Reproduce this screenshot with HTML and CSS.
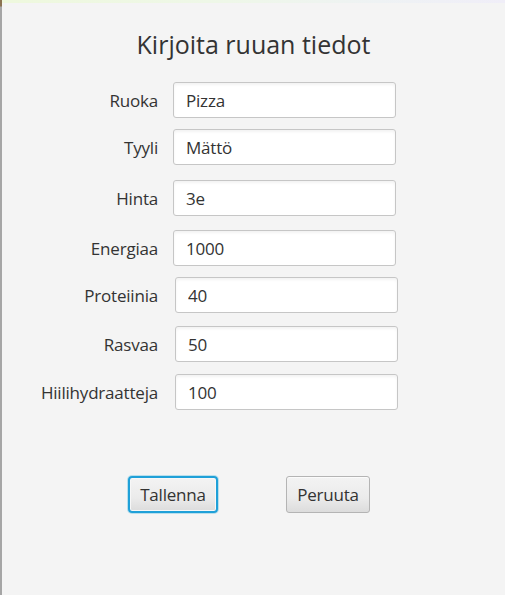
FILE: index.html
```html
<!DOCTYPE html>
<html lang="fi">
<head>
<meta charset="utf-8">
<title>Kirjoita ruuan tiedot</title>
<link rel="stylesheet" href="styles.css">
</head>
<body>
<div class="window">
  <div class="edge"></div>
  <div class="main">
    <div class="topbar"></div>
    <div class="content">
      <h1 class="title">Kirjoita ruuan tiedot</h1>
      <div class="form">
        <div class="row"><label class="lbl">Ruoka</label><input class="field" type="text" value="Pizza"></div>
        <div class="row mt11"><label class="lbl">Tyyli</label><input class="field" type="text" value="Mättö"></div>
        <div class="row mt15"><label class="lbl">Hinta</label><input class="field" type="text" value="3e"></div>
        <div class="row mt14"><label class="lbl">Energiaa</label><input class="field" type="text" value="1000"></div>
        <div class="row mt11 shifted"><label class="lbl">Proteiinia</label><input class="field" type="text" value="40"></div>
        <div class="row mt13 shifted"><label class="lbl">Rasvaa</label><input class="field" type="text" value="50"></div>
        <div class="row mt12 shifted"><label class="lbl">Hiilihydraatteja</label><input class="field" type="text" value="100"></div>
      </div>
      <div class="buttons">
        <button class="btn btn-focus" type="button">Tallenna</button>
        <button class="btn btn-cancel" type="button">Peruuta</button>
      </div>
    </div>
  </div>
</div>
</body>
</html>
```

FILE: styles.css
```css
html, body {
  margin: 0;
  padding: 0;
}
body {
  background: #f4f4f4;
  font-family: "Open Sans", "Noto Sans", sans-serif;
  color: #333333;
}
.window {
  display: flex;
  width: 505px;
  height: 595px;
  overflow: hidden;
}
.edge {
  width: 2px;
  flex: none;
  background: linear-gradient(to bottom, #8b7352 0, #8b7352 6px, #a6a6a6 7px, #a6a6a6 100%);
}
.main {
  flex: 1;
  display: flex;
  flex-direction: column;
}
.topbar {
  height: 3px;
  flex: none;
  background: linear-gradient(to right, #eef8dd 0%, #eef7e8 45%, #eef2f4 75%, #f0eef8 100%);
}
.content {
  flex: 1;
  background: #f4f4f4;
}
.title {
  margin: 0;
  padding-top: 25px;
  text-align: center;
  font-size: 25px;
  font-weight: 400;
  line-height: 32px;
  color: #333333;
}
.form {
  margin-top: 22px;
  display: flex;
  flex-direction: column;
}
.row {
  display: flex;
  align-items: center;
  gap: 15px;
  height: 36px;
}
.row.shifted { gap: 17px; }
.mt11 { margin-top: 11px; }
.mt12 { margin-top: 12px; }
.mt13 { margin-top: 13px; }
.mt14 { margin-top: 14px; }
.mt15 { margin-top: 15px; }
.lbl {
  width: 156px;
  flex: none;
  text-align: right;
  font-size: 17px;
  letter-spacing: -0.2px;
  color: #333333;
}
.field {
  box-sizing: border-box;
  width: 223px;
  height: 36px;
  margin: 0;
  padding: 0 12px;
  border: 1px solid #c6c6c6;
  border-radius: 3px;
  background: #ffffff;
  box-shadow: inset 0 2px 3px rgba(0, 0, 0, 0.05);
  font-family: "Open Sans", "Noto Sans", sans-serif;
  font-size: 17px;
  letter-spacing: -0.2px;
  color: #333333;
  outline: none;
}
.buttons {
  display: flex;
  margin-top: 66px;
  margin-left: 126px;
  gap: 68px;
}
.btn {
  box-sizing: border-box;
  height: 37px;
  margin: 0;
  padding: 0;
  font-family: "Open Sans", "Noto Sans", sans-serif;
  font-size: 17px;
  letter-spacing: -0.2px;
  color: #333333;
  border-radius: 3px;
  background: linear-gradient(to bottom, #f3f3f3 0%, #ebebeb 60%, #dcdcdc 100%);
  cursor: default;
}
.btn-focus {
  width: 90px;
  border: 2px solid #1fa0d8;
  border-radius: 4px;
  box-shadow: 0 0 0 1px rgba(3, 158, 211, 0.25), inset 0 0 0 1px #f7f7f7;
}
.btn-cancel {
  width: 84px;
  border: 1px solid #b4b4b4;
  box-shadow: inset 0 1px 0 #fbfbfb;
}
```
